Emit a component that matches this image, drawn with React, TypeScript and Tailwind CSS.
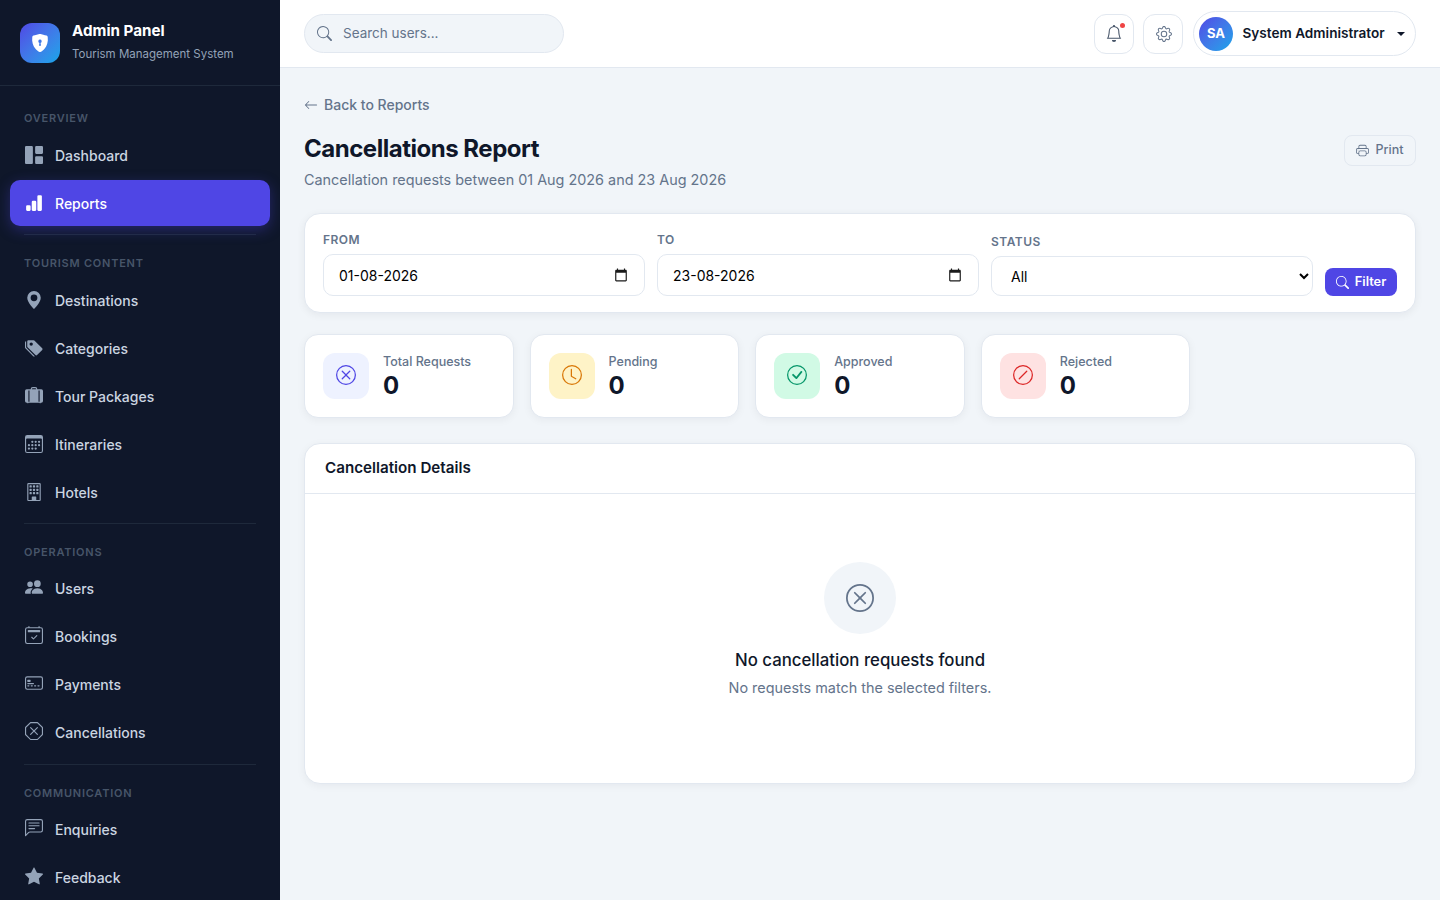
import type { ComponentType, ReactNode } from "react";
import {
  BsArrowLeft,
  BsBarChartFill,
  BsBell,
  BsBuilding,
  BsCalendar2Check,
  BsCalendar3,
  BsChatLeftText,
  BsCheckCircle,
  BsClock,
  BsCreditCard2Front,
  BsGear,
  BsGeoAltFill,
  BsGrid1X2Fill,
  BsPeopleFill,
  BsPrinter,
  BsSearch,
  BsShieldLockFill,
  BsSlashCircle,
  BsStarFill,
  BsSuitcaseLgFill,
  BsTagsFill,
  BsXCircle,
  BsXOctagon,
} from "react-icons/bs";

type NavItem = { label: string; icon: ComponentType<{ className?: string }>; active?: boolean };

const sections: { title: string; items: NavItem[] }[] = [
  {
    title: "Overview",
    items: [
      { label: "Dashboard", icon: BsGrid1X2Fill },
      { label: "Reports", icon: BsBarChartFill, active: true },
    ],
  },
  {
    title: "Tourism Content",
    items: [
      { label: "Destinations", icon: BsGeoAltFill },
      { label: "Categories", icon: BsTagsFill },
      { label: "Tour Packages", icon: BsSuitcaseLgFill },
      { label: "Itineraries", icon: BsCalendar3 },
      { label: "Hotels", icon: BsBuilding },
    ],
  },
  {
    title: "Operations",
    items: [
      { label: "Users", icon: BsPeopleFill },
      { label: "Bookings", icon: BsCalendar2Check },
      { label: "Payments", icon: BsCreditCard2Front },
      { label: "Cancellations", icon: BsXOctagon },
    ],
  },
  {
    title: "Communication",
    items: [
      { label: "Enquiries", icon: BsChatLeftText },
      { label: "Feedback", icon: BsStarFill },
    ],
  },
];

const stats = [
  { label: "Total Requests", icon: BsXCircle, box: "bg-[#eef2ff]", color: "text-[#4f46e5]" },
  { label: "Pending", icon: BsClock, box: "bg-[#fef3c7]", color: "text-[#d97706]" },
  { label: "Approved", icon: BsCheckCircle, box: "bg-[#d1fae5]", color: "text-[#059669]" },
  { label: "Rejected", icon: BsSlashCircle, box: "bg-[#fee2e2]", color: "text-[#dc2626]" },
];

function Sidebar() {
  return (
    <aside className="w-[280px] h-screen shrink-0 overflow-hidden bg-[#0f172a]">
      <div className="h-[86px] flex items-center gap-3 px-5 border-b border-[#1e293b]">
        <div className="w-10 h-10 rounded-xl bg-gradient-to-br from-[#4f46e5] to-[#0ea5e9] flex items-center justify-center text-white text-lg">
          <BsShieldLockFill />
        </div>
        <div className="-mt-[2px]">
          <div className="text-[15.2px] leading-[20px] font-bold text-white">Admin Panel</div>
          <div className="text-[11.5px] leading-[18px] mt-[4px] text-[#94a3b8]">Tourism Management System</div>
        </div>
      </div>
      <nav className="pt-6">
        {sections.map((section, i) => (
          <div key={section.title}>
            {i > 0 && <div className="h-px mx-6 mt-2 mb-5 bg-[#1e293b]" />}
            <div className="px-6 mb-1.5 text-[11px] leading-4 font-semibold uppercase tracking-[0.07em] text-[#475569]">
              {section.title}
            </div>
            <div className="flex flex-col gap-0.5 px-2.5">
              {section.items.map((item) => (
                <a
                  key={item.label}
                  className={
                    item.active
                      ? "h-[46px] flex items-center gap-3 px-[15px] rounded-[10px] bg-[#4f46e5] text-white text-sm font-medium shadow-[0_4px_14px_rgba(79,70,229,0.35)]"
                      : "h-[46px] flex items-center gap-3 px-[15px] rounded-[10px] text-[#cbd5e1] text-sm font-medium"
                  }
                >
                  <item.icon
                    className={
                      (item.active ? "w-[18px] text-lg text-white " : "w-[18px] text-lg text-[#94a3b8] ") +
                      (i < 2 ? "" : "-translate-y-0.5")
                    }
                  />
                  <span className={i < 2 ? "pt-0.5" : ""}>{item.label}</span>
                </a>
              ))}
            </div>
          </div>
        ))}
      </nav>
    </aside>
  );
}

function Topbar() {
  return (
    <header className="h-[68px] shrink-0 flex items-center justify-between px-6 bg-white border-b border-[#e2e8f0]">
      <div className="w-[260px] h-[39px] flex items-center gap-[11px] px-[12px] rounded-full bg-[#f1f5f9] border border-[#e2e8f0]">
        <BsSearch className="text-[15px] text-[#64748b]" />
        <span className="text-[13.5px] text-[#64748b]">Search users...</span>
      </div>
      <div className="flex items-center gap-2.5">
        <button className="relative w-10 h-10 flex items-center justify-center rounded-xl bg-white border border-[#e2e8f0] text-[#475569] mr-[-1px]">
          <BsBell className="text-[17px] -translate-x-[0.5px]" />
          <span className="absolute top-[8px] right-[8px] w-[5px] h-[5px] rounded-full bg-[#ef4444]" />
        </button>
        <button className="w-10 h-10 flex items-center justify-center rounded-xl bg-white border border-[#e2e8f0] text-[#64748b]">
          <BsGear className="text-[16px] translate-x-px" />
        </button>
        <div className="h-[45px] w-[223px] flex items-center pl-[5px] pr-[10px] rounded-full bg-white border border-[#e2e8f0]">
          <div className="w-[34px] h-[34px] rounded-full bg-gradient-to-br from-[#4f46e5] to-[#0ea5e9] flex items-center justify-center text-white text-[13px] font-bold">
            SA
          </div>
          <span className="ml-[9.5px] text-[13.6px] font-semibold text-[#0f172a]">System Administrator</span>
          <span className="ml-auto w-0 h-0 border-x-4 border-x-transparent border-t-4 border-t-[#0f172a]" />
        </div>
      </div>
    </header>
  );
}

function Field({ label, children }: { label: string; children: ReactNode }) {
  return (
    <div className="flex-1 min-w-0">
      <div className="mb-[5px] text-xs leading-[18px] font-semibold uppercase tracking-[0.04em] text-[#64748b]">{label}</div>
      {children}
    </div>
  );
}

function DateBox({ value }: { value: string }) {
  return (
    <div className="h-[42px] flex items-center justify-between pl-[15px] pr-4 rounded-[10px] bg-white border border-[#e2e8f0]">
      <span className="pt-0.5 text-sm text-black">{value}</span>
      <svg viewBox="0 0 24 24" className="w-[14px] h-[14px] -mt-px fill-[#1a1a1a]">
        <path d="M20 3h-1V1h-2v2H7V1H5v2H4c-1.1 0-2 .9-2 2v16c0 1.1.9 2 2 2h16c1.1 0 2-.9 2-2V5c0-1.1-.9-2-2-2zm0 18H4V8h16v13z" />
      </svg>
    </div>
  );
}

export default function App() {
  return (
    <div className="h-screen flex overflow-hidden bg-[#f1f5f9] font-[Inter,sans-serif]">
      <Sidebar />
      <div className="flex-1 min-w-0 flex flex-col">
        <Topbar />
        <main className="px-6 pt-[26px]">
          <a className="flex items-center gap-1.5 text-sm leading-[21px] font-medium text-[#64748b]">
            <BsArrowLeft className="text-sm" />
            Back to Reports
          </a>
          <div className="mt-4 flex items-start justify-between">
            <div>
              <h1 className="text-2xl leading-[36px] font-bold tracking-[-0.02em] text-[#0f172a]">Cancellations Report</h1>
              <p className="mt-[2px] text-[14.4px] leading-[22px] text-[#64748b]">
                Cancellation requests between 01 Aug 2026 and 23 Aug 2026
              </p>
            </div>
            <button className="h-[31px] w-[72px] flex items-center justify-center gap-1.5 mt-[4px] rounded-lg border border-[#e2e8f0] text-[12.5px] font-medium text-[#64748b]">
              <BsPrinter className="text-[13px] -translate-x-px" />
              Print
            </button>
          </div>

          <div className="mt-[22px] flex items-end gap-3 px-[18px] pt-[17px] pb-4 rounded-2xl bg-white border border-[#e2e8f0] shadow-[0_2px_8px_rgba(15,23,42,0.06)]">
            <Field label="From">
              <DateBox value="01-08-2026" />
            </Field>
            <Field label="To">
              <DateBox value="23-08-2026" />
            </Field>
            <Field label="Status">
              <select className="w-full h-10 pl-[15px] rounded-[10px] bg-white border border-[#e2e8f0] text-sm text-black">
                <option>All</option>
              </select>
            </Field>
            <button className="h-7 w-[72px] shrink-0 flex items-center justify-center gap-1.5 rounded-lg bg-[#4f46e5] text-white text-[12.8px] font-semibold">
              <BsSearch className="text-[13px]" />
              Filter
            </button>
          </div>

          <div className="mt-[21px] grid grid-cols-5 gap-4">
            {stats.map((stat) => (
              <div key={stat.label} className="flex items-center gap-3.5 p-[18px] rounded-[14px] bg-white border border-[#e2e8f0] shadow-[0_2px_8px_rgba(15,23,42,0.05)]">
                <div className={`w-[46px] h-[46px] rounded-xl flex items-center justify-center ${stat.box} ${stat.color}`}>
                  <stat.icon className="text-xl -translate-y-px" />
                </div>
                <div>
                  <div className="text-[12.5px] leading-[17px] font-medium text-[#64748b]">{stat.label}</div>
                  <div className="translate-y-px text-2xl leading-[29px] font-bold text-[#0f172a]">0</div>
                </div>
              </div>
            ))}
          </div>

          <div className="mt-[25px] rounded-2xl bg-white border border-[#e2e8f0] shadow-[0_2px_8px_rgba(15,23,42,0.05)]">
            <div className="h-[50px] flex items-center px-5 border-b border-[#e2e8f0] text-[15.2px] font-semibold text-[#0f172a]">
              Cancellation Details
            </div>
            <div className="h-[289px] flex flex-col items-center pt-[68px]">
              <div className="w-[72px] h-[72px] rounded-full bg-[#f1f5f9] flex items-center justify-center text-[#64748b]">
                <BsXCircle className="text-[28px]" />
              </div>
              <div className="mt-[13px] text-[16.8px] leading-[26px] font-medium text-[#0f172a]">No cancellation requests found</div>
              <div className="mt-[4px] text-[14.4px] leading-[21px] text-[#64748b]">No requests match the selected filters.</div>
            </div>
          </div>
        </main>
      </div>
    </div>
  );
}
